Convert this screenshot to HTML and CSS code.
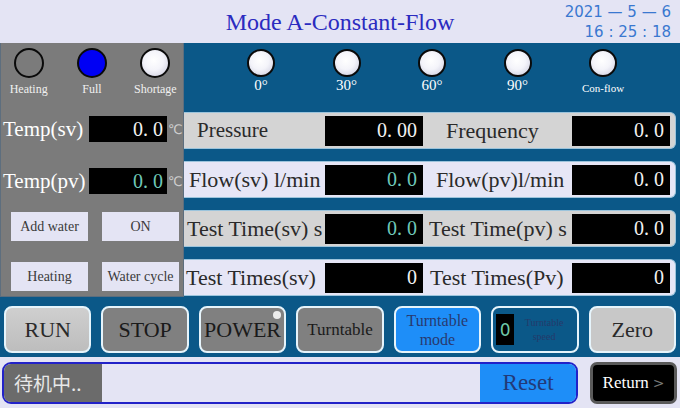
FILE: index.html
```html
<!DOCTYPE html>
<html>
<head>
<meta charset="utf-8">
<link rel="stylesheet" href="styles.css">
</head>
<body>
<div class="screen">
  <header class="header">
    <div></div>
    <div class="title">Mode A-Constant-Flow</div>
    <div class="clock">
      <div>2021 — 5 — 6</div>
      <div>16 : 25 : 18</div>
    </div>
  </header>
  <main class="main">
    <div class="top">
      <section class="panel">
        <div class="lamps small">
          <div class="lamp"><span class="dot off"></span><span class="lbl">Heating</span></div>
          <div class="lamp"><span class="dot on"></span><span class="lbl">Full</span></div>
          <div class="lamp"><span class="dot white"></span><span class="lbl">Shortage</span></div>
        </div>
        <div class="temp t1"><span class="tlabel">Temp(sv)</span><span class="val tval">0. 0</span><span class="unit">℃</span></div>
        <div class="temp t2"><span class="tlabel">Temp(pv)</span><span class="val tval teal">0. 0</span><span class="unit">℃</span></div>
        <div class="pbtns b1"><span class="pbtn">Add water</span><span class="pbtn">ON</span></div>
        <div class="pbtns b2"><span class="pbtn">Heating</span><span class="pbtn">Water cycle</span></div>
      </section>
      <section class="right">
        <div class="angles">
          <div class="lamp"><span class="dot white"></span><span class="alb">0°</span></div>
          <div class="lamp"><span class="dot white"></span><span class="alb">30°</span></div>
          <div class="lamp"><span class="dot white"></span><span class="alb">60°</span></div>
          <div class="lamp"><span class="dot white"></span><span class="alb">90°</span></div>
          <div class="lamp"><span class="dot white"></span><span class="alb con">Con-flow</span></div>
        </div>
        <div class="row grey r1">
          <span class="lab">Pressure</span><span class="val">0. 00</span>
          <span class="lab">Frequency</span><span class="val">0. 0</span>
        </div>
        <div class="row lav r2">
          <span class="lab">Flow(sv) l/min</span><span class="val teal">0. 0</span>
          <span class="lab">Flow(pv)l/min</span><span class="val">0. 0</span>
        </div>
        <div class="row grey r3">
          <span class="lab">Test Time(sv) s</span><span class="val teal">0. 0</span>
          <span class="lab">Test Time(pv) s</span><span class="val">0. 0</span>
        </div>
        <div class="row lav r4">
          <span class="lab">Test Times(sv)</span><span class="val">0</span>
          <span class="lab">Test Times(Pv)</span><span class="val">0</span>
        </div>
      </section>
    </div>
    <div class="btnrow">
      <div class="btn run">RUN</div>
      <div class="btn dark">STOP</div>
      <div class="btn dark power">POWER<span class="pdot"></span></div>
      <div class="btn dark small">Turntable</div>
      <div class="btn mode">Turntable<br>mode</div>
      <div class="btn speed"><span class="spd">0</span><span class="stxt">Turntable<br>speed</span></div>
      <div class="btn zero">Zero</div>
    </div>
  </main>
  <footer class="footer">
    <div class="status">
      <span class="state">待机中..</span>
      <span class="fill"></span>
      <span class="reset">Reset</span>
    </div>
    <div class="ret">Return <span class="chev">&gt;</span></div>
  </footer>
</div>
</body>
</html>
```
FILE: styles.css
```css
html, body { margin: 0; padding: 0; }
body {
  width: 680px;
  height: 408px;
  overflow: hidden;
  background: #e4e4f4;
  font-family: "Liberation Serif", serif;
}
.screen { width: 680px; height: 408px; display: flex; flex-direction: column; }

.header { height: 43px; display: grid; grid-template-columns: 1fr auto 1fr; align-items: start; background: #e4e4f4; }
.title { color: #2b2bc0; font-size: 24px; line-height: 24px; padding-top: 10px; }
.clock { justify-self: end; padding-right: 9px; padding-top: 2px; font-family: "DejaVu Sans", sans-serif; font-size: 15px; line-height: 20px; color: #3a78d0; text-align: right; }

.main { height: 314px; background: #0b5888; display: flex; flex-direction: column; }
.top { display: flex; height: 254px; }

.panel { width: 184px; flex-shrink: 0; background: #7b7b7b; border: 1px solid #5d6e7e; border-top: none; box-sizing: border-box; display: flex; flex-direction: column; }
.lamps { display: flex; gap: 8px; padding: 5px 0 0 0; height: 57px; box-sizing: border-box; }
.lamp { display: flex; flex-direction: column; align-items: center; }
.dot { width: 24px; height: 24px; border: 2px solid #0a0a0a; border-radius: 50%; display: block; flex-shrink: 0; }
.dot.off { background: transparent; }
.dot.on { background: #0000f4; }
.dot.white { background: radial-gradient(circle at 45% 40%, #ffffff 0%, #f4f4fa 45%, #c8c8dc 100%); }
.small .lamp { width: 56px; }
.small .dot { width: 26px; height: 26px; }
.lbl { color: #f0f0f0; font-size: 12px; margin-top: 4px; white-space: nowrap; }

.temp { display: flex; align-items: center; height: 26px; }
.t1 { margin-top: 16px; }
.t2 { margin-top: 26px; }
.tlabel { color: #ffffff; font-size: 21px; width: 88px; flex-shrink: 0; padding-left: 2px; box-sizing: border-box; white-space: nowrap; }
.temp .tval { width: 78px; height: 26px; flex-shrink: 0; padding-right: 4px; }
.unit { color: #cfcfcf; font-size: 13px; font-family: "DejaVu Sans", sans-serif; margin-left: 1px; white-space: nowrap; }

.pbtns { display: flex; gap: 14px; padding-left: 10px; }
.b1 { margin-top: 18px; }
.b2 { margin-top: 21px; }
.pbtn { width: 77px; height: 29px; background: #e4e4f4; color: #3a3a3a; font-size: 14px; display: flex; align-items: center; justify-content: center; box-sizing: border-box; white-space: nowrap; }

.right { flex: 1; display: flex; flex-direction: column; padding-right: 4px; }
.angles { height: 57px; display: flex; padding-left: 63px; gap: 57.5px; padding-top: 6px; box-sizing: border-box; }
.angles .lamp { width: 28px; }
.alb { color: #ffffff; font-size: 15px; line-height: 16px; margin-top: 0; white-space: nowrap; }
.alb.con { font-size: 11px; margin-top: 3px; }

.row { height: 37px; margin-top: 12px; display: flex; align-items: center; border-radius: 0 6px 6px 0; border: 1px solid #9cc4dc; border-left: none; box-sizing: border-box; color: #2a2a2a; }
.row.grey { background: #d4d4d4; }
.row.lav { background: #e6e6f6; }
.lab { font-size: 22px; white-space: nowrap; box-sizing: border-box; flex-shrink: 0; }
.lab:nth-child(1) { width: 141px; }
.lab:nth-child(3) { width: 149px; }
.r1 .lab:nth-child(1) { padding-left: 13px; font-size: 21px; }
.r1 .lab:nth-child(3) { padding-left: 23px; }
.r2 .lab:nth-child(1) { padding-left: 5px; }
.r2 .lab:nth-child(3) { padding-left: 13px; }
.r3 .lab:nth-child(1) { padding-left: 3px; }
.r3 .lab:nth-child(3) { padding-left: 6px; }
.r4 .lab:nth-child(1) { padding-left: 2px; }
.r4 .lab:nth-child(3) { padding-left: 7px; }
.val { background: #000; color: #f2f2f2; width: 98px; height: 30px; flex-shrink: 0; font-size: 20px; display: flex; align-items: center; justify-content: flex-end; padding-right: 6px; box-sizing: border-box; }
.val.teal { color: #6fc8b8; }

.btnrow { display: flex; gap: 10px; padding: 9px 4px 0 4px; height: 60px; box-sizing: border-box; }
.btn { width: 88px; height: 47px; border: 2px solid #e6f4fb; border-radius: 8px; box-sizing: border-box; display: flex; align-items: center; justify-content: center; font-size: 22px; color: #1a1a1a; text-align: center; position: relative; }
.btn.run { background: linear-gradient(#cfcfcf, #bdbdbd); color: #2a2a2a; }
.btn.dark { background: #808080; }
.btn.small { font-size: 17px; }
.pdot { position: absolute; top: 3px; right: 3px; width: 8px; height: 8px; border-radius: 50%; background: #ececec; }
.btn.mode { background: #1e8ef8; color: #283a70; font-size: 16px; line-height: 19px; }
.btn.speed { background: #0b5888; justify-content: flex-start; padding-left: 3px; gap: 4px; }
.spd { background: #000; color: #6fc8a8; width: 18px; height: 31px; display: flex; align-items: center; justify-content: center; font-size: 17px; font-family: "DejaVu Sans", sans-serif; }
.stxt { font-size: 10px; line-height: 14px; color: #243a6a; text-align: center; width: 52px; }
.btn.zero { background: #c8c8c8; color: #2a2a2a; }

.footer { flex: 1; display: flex; align-items: center; padding: 0 3px 0 2px; gap: 12px; }
.status { width: 577px; height: 42px; border: 2px solid #2222c8; border-radius: 9px; box-sizing: border-box; display: flex; overflow: hidden; background: #e4e4f4; }
.state { width: 98px; background: #6b6b6b; color: #e8e8e8; font-family: "Noto Sans CJK SC", sans-serif; font-size: 19px; display: flex; align-items: center; padding-left: 10px; box-sizing: border-box; }
.fill { flex: 1; }
.reset { width: 96px; background: #1e8ef8; color: #223a78; font-size: 23px; display: flex; align-items: center; justify-content: center; }
.ret { width: 87px; height: 42px; background: #000; border: 3px solid #5a5a5a; border-radius: 7px; box-sizing: border-box; color: #fff; font-size: 17px; display: flex; align-items: center; justify-content: center; }
.chev { color: #777; margin-left: 4px; font-family: "DejaVu Sans", sans-serif; font-size: 14px; }
```
